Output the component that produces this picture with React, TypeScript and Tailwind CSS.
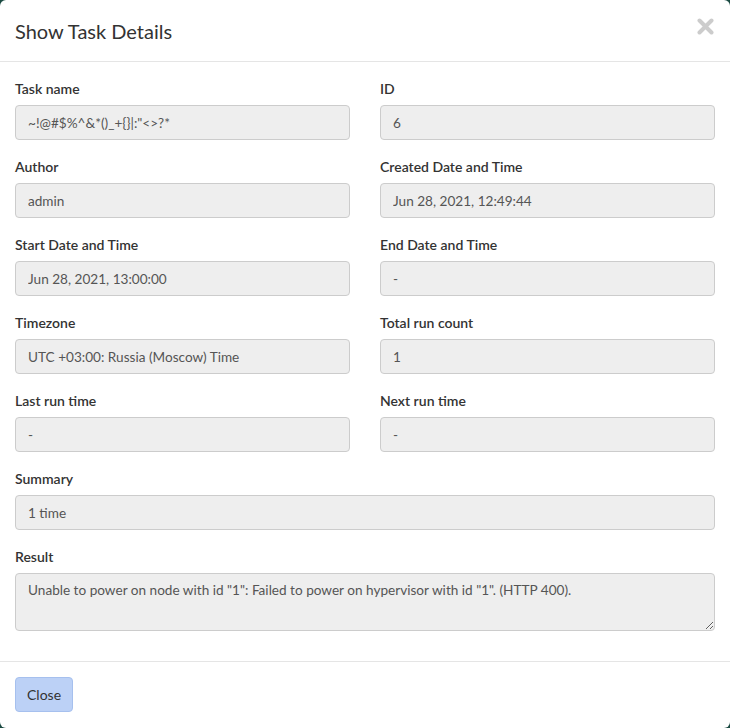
import React from "react"

const fields: [string, string][][] = [
  [["Task name", "~!@#$%^&*()_+{}|:\"<>?*"], ["ID", "6"]],
  [["Author", "admin"], ["Created Date and Time", "Jun 28, 2021, 12:49:44"]],
  [["Start Date and Time", "Jun 28, 2021, 13:00:00"], ["End Date and Time", "-"]],
  [["Timezone", "UTC +03:00: Russia (Moscow) Time"], ["Total run count", "1"]],
  [["Last run time", "-"], ["Next run time", "-"]],
]

function Field({ label, value }: { label: string; value: string }) {
  return (
    <div className="flex flex-col">
      <label className="text-[14px] font-semibold text-[#333] leading-[20px] mb-[6px]">{label}</label>
      <input
        readOnly
        value={value}
        className="h-[35px] px-[12px] bg-[#eeeeee] border border-[#cccccc] rounded-[4px] text-[13.6px] text-[#555] outline-none"
      />
    </div>
  )
}

export default function App() {
  return (
    <div className="bg-[#1b4a42] min-h-[728px]" style={{ fontFamily: 'Lato, "Liberation Sans", sans-serif' }}>
      <div className="bg-white rounded-[6px] w-[730px] h-[728px] flex flex-col">
        <div className="h-[62px] border-b border-[#e5e5e5] flex items-center justify-between px-[15px]">
          <h4 className="text-[20px] text-[#333] leading-none">Show Task Details</h4>
          <button className="-mt-[8px] mr-[1px]">
            <svg width="17" height="17" viewBox="0 0 17 17">
              <path d="M2.5 2.5 L14.5 14.5 M14.5 2.5 L2.5 14.5" stroke="#cccccc" strokeWidth="4" strokeLinecap="round" />
            </svg>
          </button>
        </div>
        <div className="px-[15px] pt-[17px] flex flex-col gap-[17px]">
          {fields.map((row, i) => (
            <div key={i} className="grid grid-cols-2 gap-x-[30px]">
              <Field label={row[0][0]} value={row[0][1]} />
              <Field label={row[1][0]} value={row[1][1]} />
            </div>
          ))}
          <Field label="Summary" value="1 time" />
          <div className="flex flex-col">
            <label className="text-[14px] font-semibold text-[#333] leading-[20px] mb-[6px]">Result</label>
            <textarea
              readOnly
              value={'Unable to power on node with id "1": Failed to power on hypervisor with id "1". (HTTP 400).'}
              className="h-[58px] px-[12px] py-[6px] bg-[#eeeeee] border border-[#cccccc] rounded-[4px] text-[13.6px] text-[#555] outline-none resize-y leading-[20px]"
            />
          </div>
        </div>
        <div className="mt-[30px] border-t border-[#e5e5e5] px-[15px] pt-[15px]">
          <button className="h-[35px] px-[11px] bg-[#bcd1f6] border border-[#a6c0ee] rounded-[4px] text-[14px] text-[#333]">
            Close
          </button>
        </div>
      </div>
    </div>
  )
}
